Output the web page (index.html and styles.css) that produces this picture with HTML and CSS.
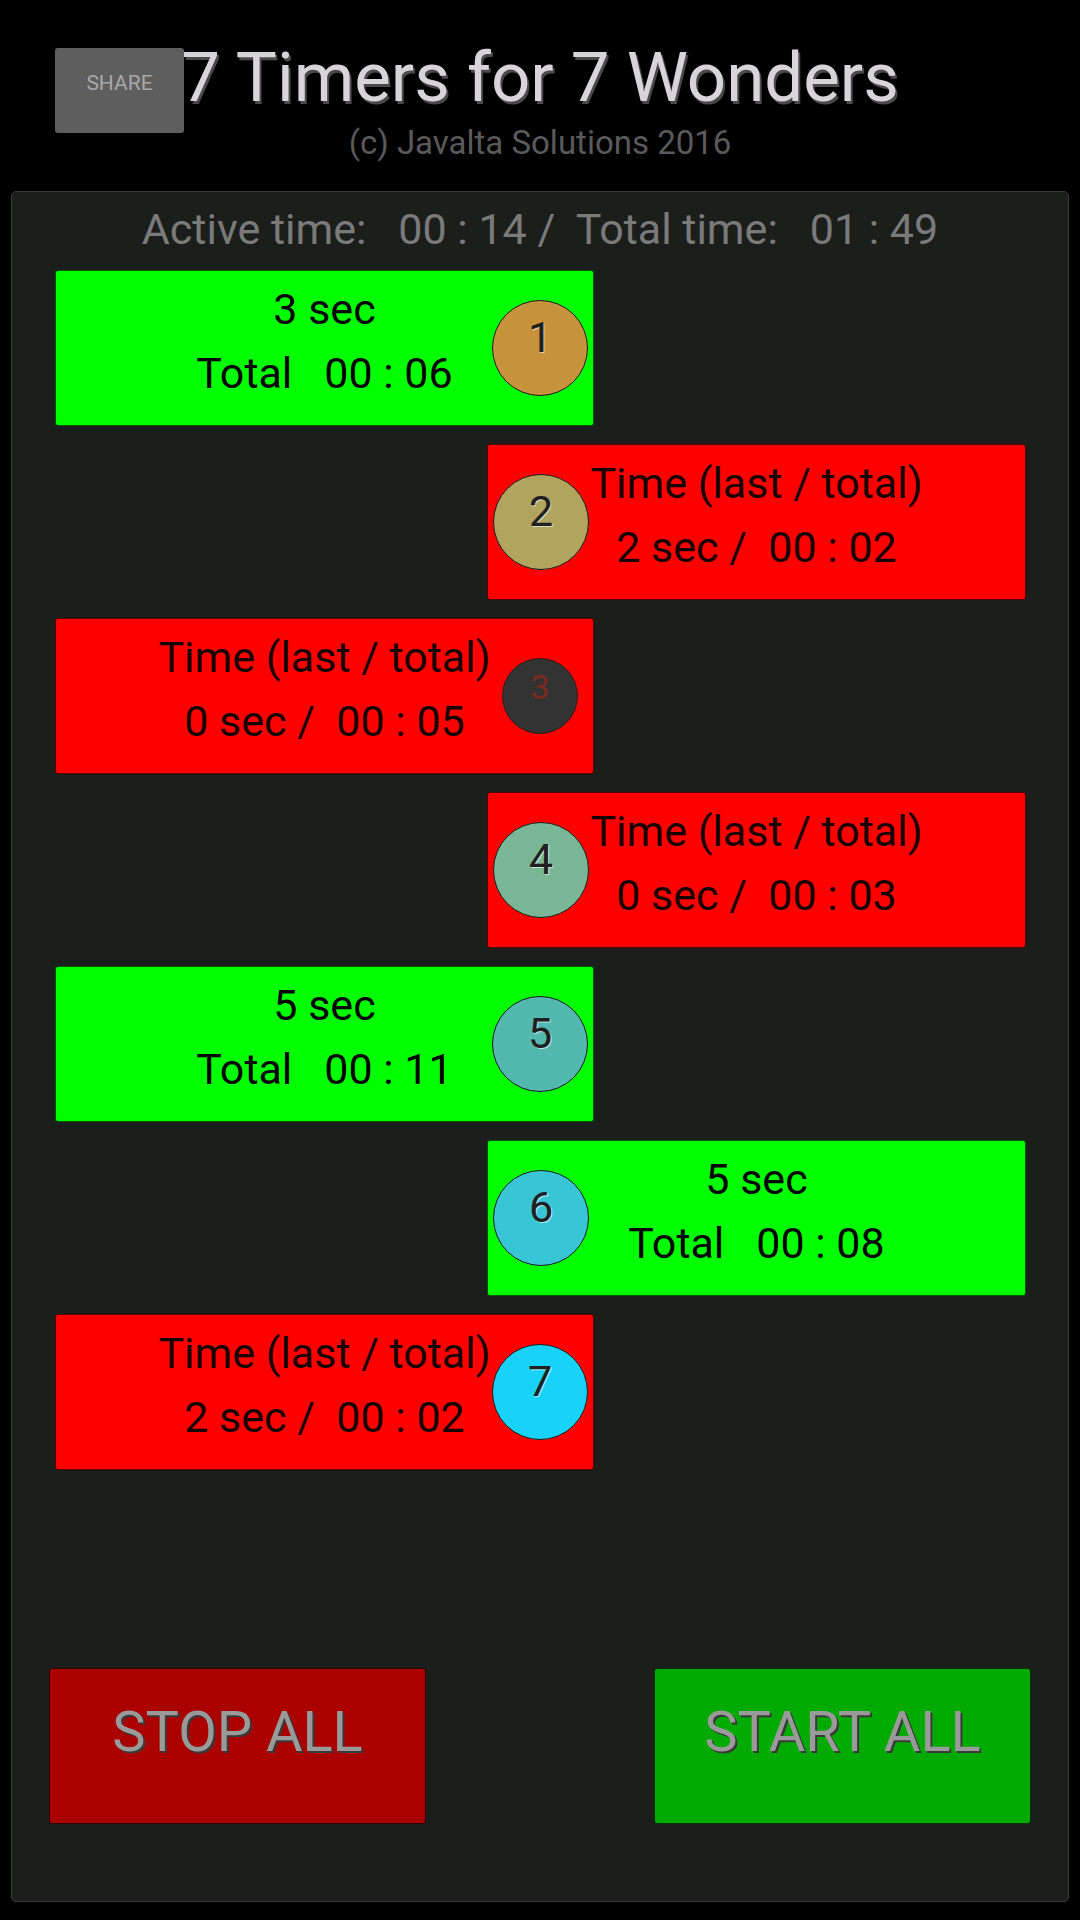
FILE: index.html
```html
<!DOCTYPE html>
<html>
<head>
<meta charset="utf-8">
<title>7 Timers for 7 Wonders</title>
<link rel="stylesheet" href="styles.css">
</head>
<body>
<header class="header">
  <div class="share">SHARE</div>
  <h1 class="title">7 Timers for 7 Wonders</h1>
  <div class="subtitle">(c) Javalta Solutions 2016</div>
</header>
<main class="panel">
  <div class="status">Active time:   00 : 14 /  Total time:   01 : 49</div>
  <div class="timers">
    <div class="card card-left on">
      <div class="lines"><div>3 sec</div><div>Total   00 : 06</div></div>
      <div class="badge b1">1</div>
    </div>
    <div class="card card-right off">
      <div class="lines"><div>Time (last / total)</div><div>2 sec /  00 : 02</div></div>
      <div class="badge b2">2</div>
    </div>
    <div class="card card-left off">
      <div class="lines"><div>Time (last / total)</div><div>0 sec /  00 : 05</div></div>
      <div class="badge b3">3</div>
    </div>
    <div class="card card-right off">
      <div class="lines"><div>Time (last / total)</div><div>0 sec /  00 : 03</div></div>
      <div class="badge b4">4</div>
    </div>
    <div class="card card-left on">
      <div class="lines"><div>5 sec</div><div>Total   00 : 11</div></div>
      <div class="badge b5">5</div>
    </div>
    <div class="card card-right on">
      <div class="lines"><div>5 sec</div><div>Total   00 : 08</div></div>
      <div class="badge b6">6</div>
    </div>
    <div class="card card-left off">
      <div class="lines"><div>Time (last / total)</div><div>2 sec /  00 : 02</div></div>
      <div class="badge b7">7</div>
    </div>
  </div>
  <div class="actions">
    <div class="btn btn-stop">STOP ALL</div>
    <div class="btn btn-start">START ALL</div>
  </div>
</main>
</body>
</html>
```
FILE: styles.css
```css
* { box-sizing: border-box; }
html, body {
  margin: 0;
  padding: 0;
  background: #000;
  font-family: Roboto, "Liberation Sans", sans-serif;
}
body { width: 1080px; height: 1920px; overflow: hidden; }

.header {
  position: relative;
  height: 191px;
  padding-top: 38px;
  text-align: center;
}
.share {
  position: absolute;
  left: 55px;
  top: 48px;
  width: 129px;
  height: 85px;
  background: #5e5e5e;
  border-radius: 3px;
  color: #a8a8a8;
  font-size: 21px;
  padding-top: 23px;
  text-align: center;
}
.title {
  margin: 0;
  font-weight: 400;
  font-size: 69px;
  line-height: 80px;
  color: #d8d5d8;
  text-shadow: 2px 3px 0 #4a4a4a;
}
.subtitle {
  margin-top: 10px;
  font-size: 33px;
  line-height: 30px;
  color: #5a5a5a;
}

.panel {
  margin: 0 11px;
  height: 1711px;
  background: #1c1e1c;
  border: 1px solid #3a3b3a;
  border-radius: 5px;
  padding-top: 14px;
}
.status {
  white-space: pre;
  text-align: center;
  font-size: 43px;
  line-height: 47px;
  color: #7a7a7a;
}
.timers {
  margin-top: 17px;
  padding: 0 42px 0 43px;
  display: flex;
  flex-direction: column;
  gap: 18px;
}
.card {
  position: relative;
  width: 539px;
  height: 156px;
  border: 1px solid rgba(0,0,0,0.65);
  border-radius: 3px;
  padding-top: 6px;
}
.card-left { align-self: flex-start; }
.card-right { align-self: flex-end; }
.on { background: #00ff00; color: #000; }
.off { background: #ff0000; color: #160000; }
.lines {
  white-space: pre;
  text-align: center;
  font-size: 43px;
  line-height: 64px;
}
.badge {
  position: absolute;
  top: 29px;
  width: 96px;
  height: 96px;
  border-radius: 50%;
  border: 1px solid #1a1a1a;
  text-align: center;
  font-size: 43px;
  line-height: 50px;
  padding-top: 11px;
  color: #202020;
  text-shadow: 1px 1px 0 rgba(255,255,255,0.6);
}
.card-left .badge { right: 5px; }
.card-right .badge { left: 5px; }
.b1 { background: #c8923b; }
.b2 { background: #b0a45f; }
.b3 { background: #333333; color: #7a2a1e; text-shadow: none; transform: scale(0.79); }
.b4 { background: #79b796; }
.b5 { background: #52b8b0; }
.b6 { background: #38c6d6; }
.b7 { background: #18d2f8; }

.actions {
  margin-top: 198px;
  padding: 0 37px;
  display: flex;
  justify-content: space-between;
}
.btn {
  width: 377px;
  height: 156px;
  border: 1px solid rgba(0,0,0,0.7);
  border-radius: 3px;
  text-align: center;
  font-size: 56px;
  line-height: 66px;
  padding-top: 30px;
  color: #9a9a9a;
  text-shadow: 2px 2px 0 #3a3a3a;
}
.btn-stop { background: #aa0000; }
.btn-start { background: #00aa00; }
```
